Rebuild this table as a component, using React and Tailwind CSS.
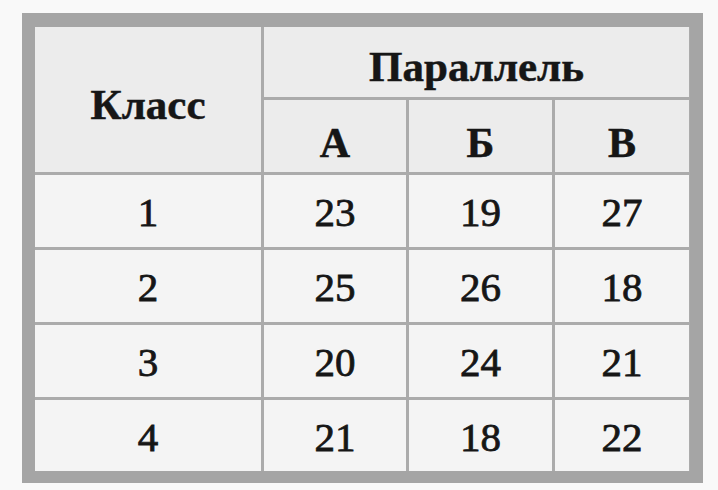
import React from 'react';

const rows = [
  ['1', '23', '19', '27'],
  ['2', '25', '26', '18'],
  ['3', '20', '24', '21'],
  ['4', '21', '18', '22'],
];

const serif = { fontFamily: '"Liberation Serif", "DejaVu Serif", serif' };

export default function App() {
  return (
    <div className="w-[718px] h-[490px] bg-[#f9f9f9] pt-[13px] pl-[22px]" style={serif}>
      <div className="w-[681px] border-t-[14px] border-l-[13px] border-r-[13px] border-b-[12px] border-[#a5a5a5]">
        <div className="grid grid-cols-[226px_142px_143px_134px] grid-rows-[70px_72px_72px_72px_72px_71px] gap-[3px] bg-[#ababab] text-[#161616]">
          <div className="row-span-2 bg-[#ececec] flex items-center justify-center pt-[12px] text-[43px] font-bold [-webkit-text-stroke:0.5px_#161616]">
            Класс
          </div>
          <div className="col-span-3 bg-[#ececec] flex items-center justify-center pt-[10px] text-[43px] font-bold [-webkit-text-stroke:0.5px_#161616]">
            Параллель
          </div>
          {['А', 'Б', 'В'].map((h) => (
            <div key={h} className="bg-[#ececec] flex items-center justify-center pt-[14px] text-[42px] font-bold [-webkit-text-stroke:0.5px_#161616]">
              {h}
            </div>
          ))}
          {rows.map((r) =>
            r.map((v, i) => (
              <div
                key={r[0] + '-' + i}
                className="bg-[#f4f4f4] flex items-center justify-center pt-[4px] text-[41px] [-webkit-text-stroke:0.8px_#161616]"
              >
                {v}
              </div>
            ))
          )}
        </div>
      </div>
    </div>
  );
}
